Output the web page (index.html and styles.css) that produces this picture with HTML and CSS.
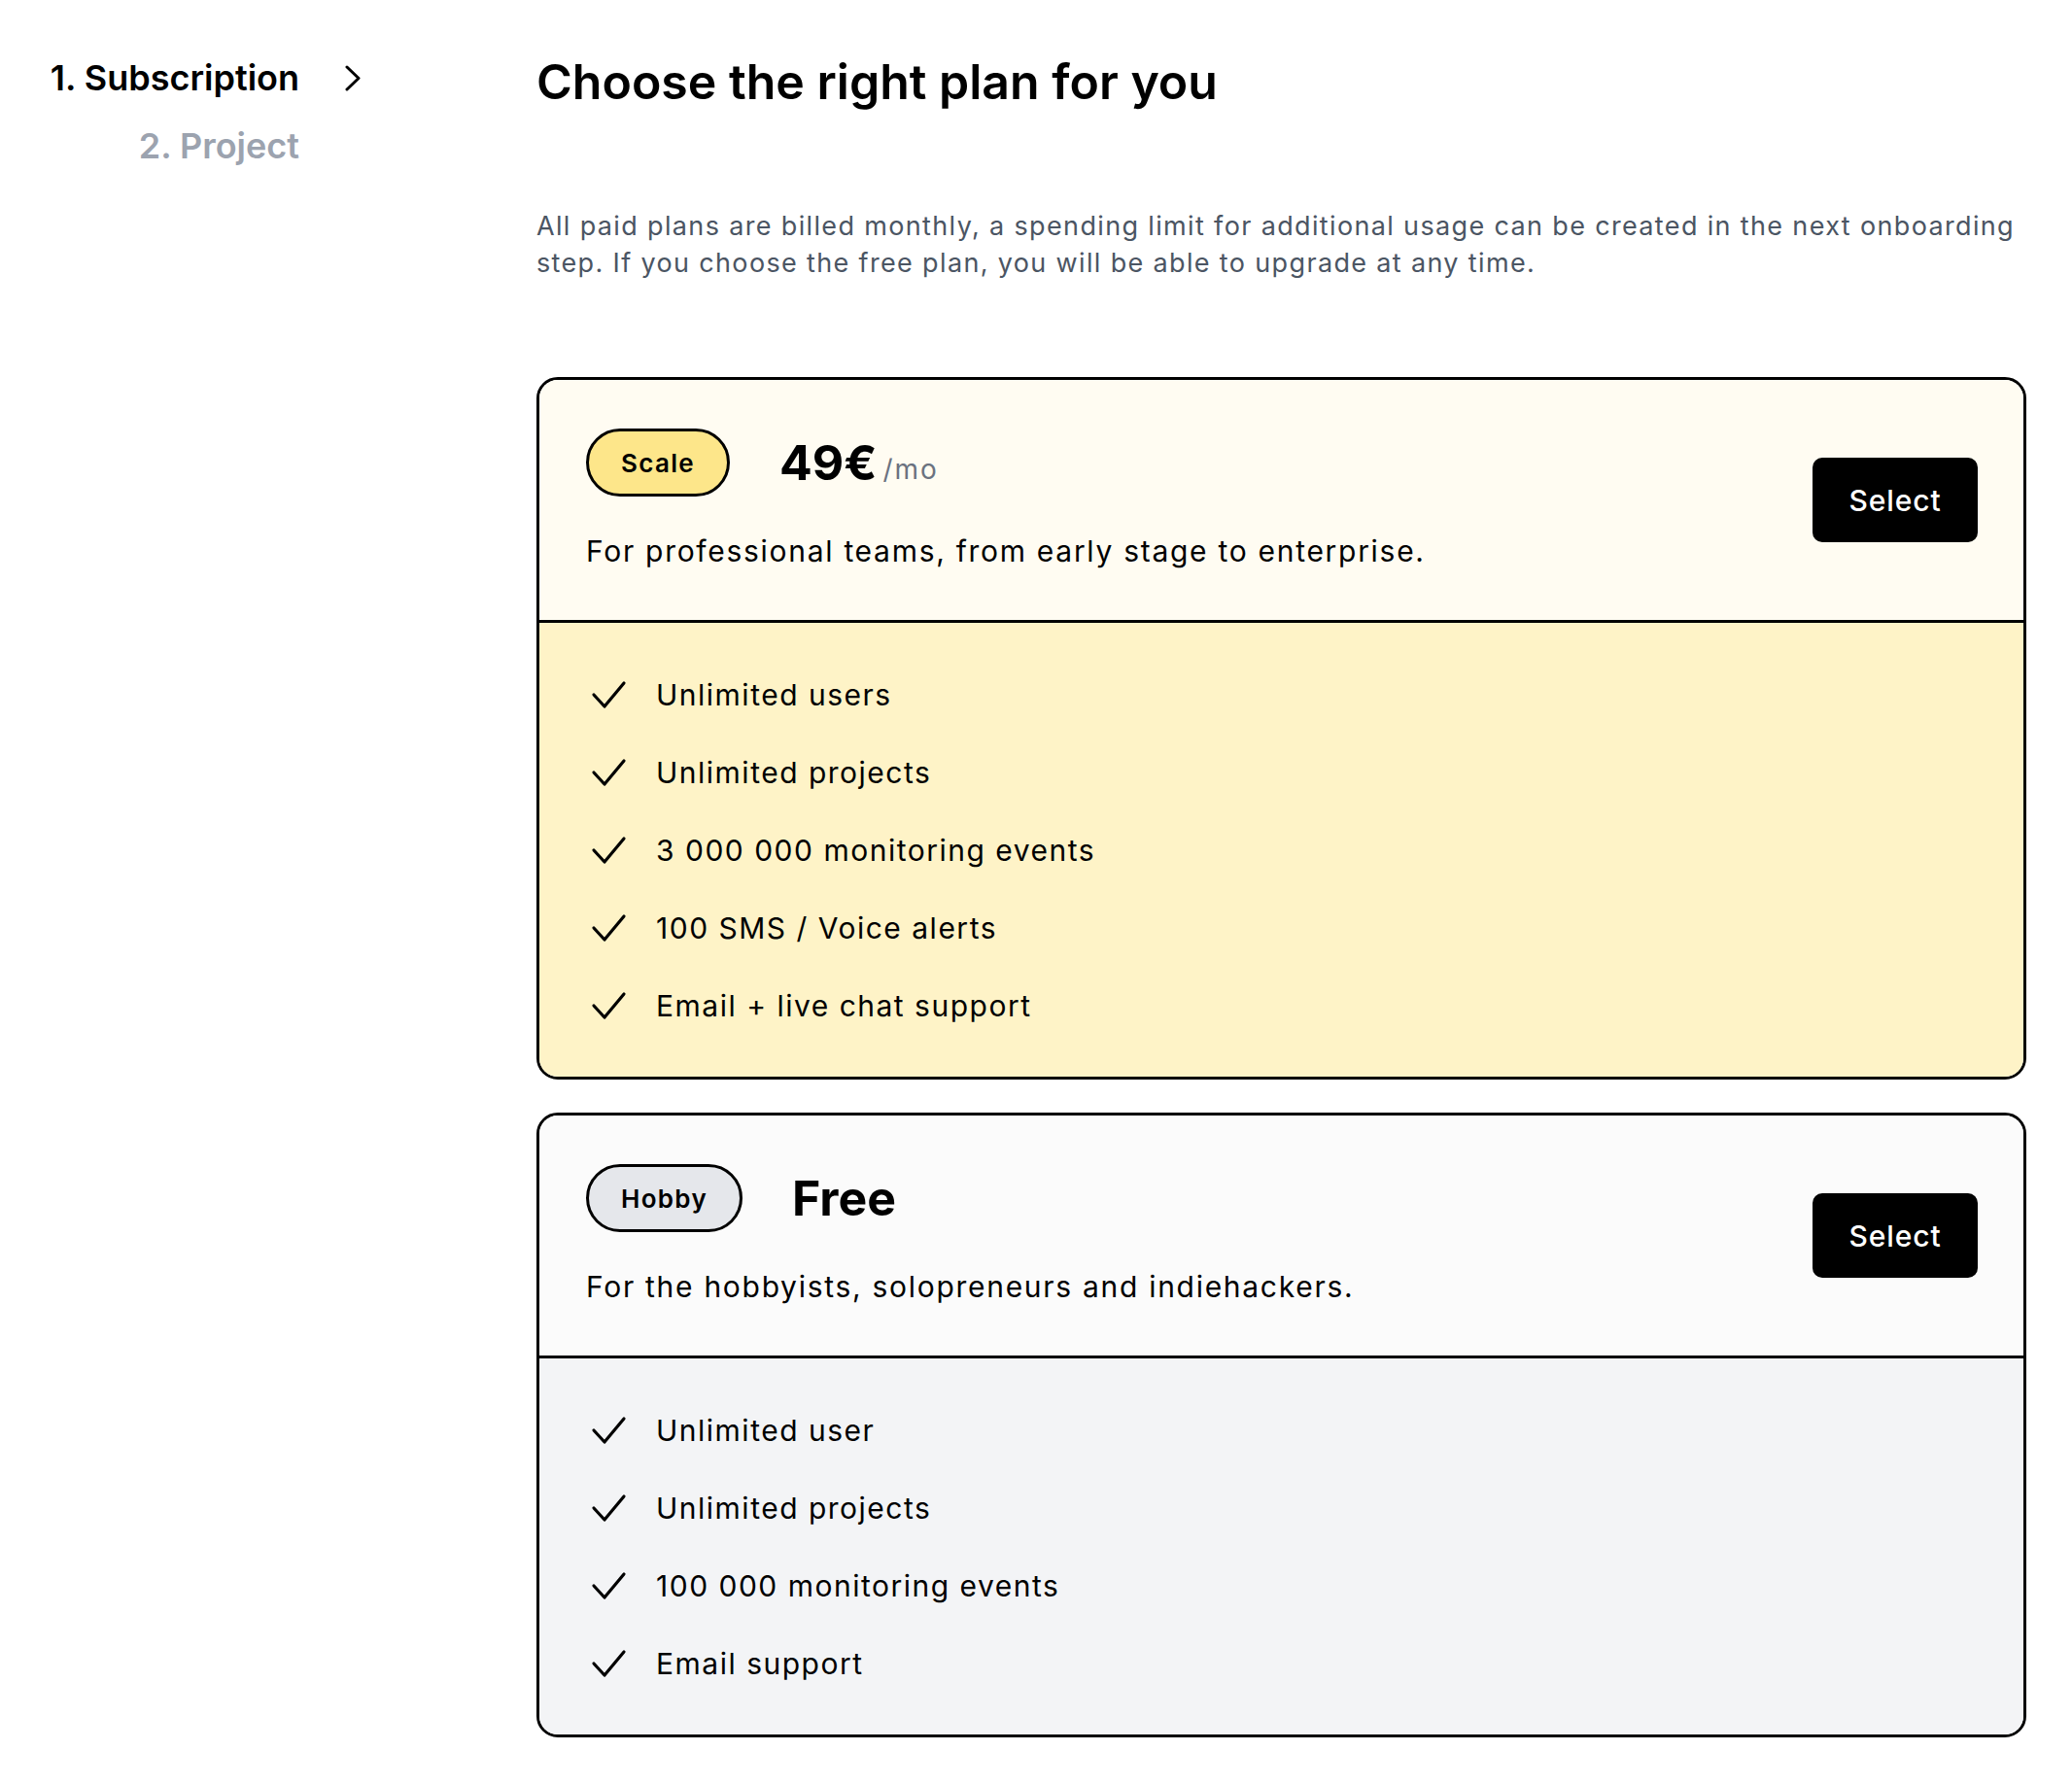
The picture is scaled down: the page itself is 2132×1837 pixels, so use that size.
FILE: index.html
```html
<!DOCTYPE html>
<html lang="en">
<head>
<meta charset="utf-8">
<title>Choose plan</title>
<link rel="stylesheet" href="styles.css">
</head>
<body>
<div class="page">
  <nav class="steps">
    <div class="step active"><span class="step-label">1. Subscription</span><svg class="chev" width="16" height="27" viewBox="0 0 16 27"><path d="M2 2 L14 13.5 L2 25" fill="none" stroke="#000" stroke-width="3" stroke-linecap="round" stroke-linejoin="round"/></svg></div>
    <div class="step"><span class="step-label">2. Project</span></div>
  </nav>
  <main class="main">
    <h1 class="title">Choose the right plan for you</h1>
    <p class="intro">All paid plans are billed monthly, a spending limit for additional usage can be created in the next onboarding step. If you choose the free plan, you will be able to upgrade at any time.</p>
    <div class="plans">
      <section class="plan plan-scale">
        <div class="plan-head">
          <div class="plan-info">
            <div class="plan-title"><span class="badge">Scale</span><span class="price">49€</span><span class="per">/mo</span></div>
            <p class="plan-desc">For professional teams, from early stage to enterprise.</p>
          </div>
          <button class="select">Select</button>
        </div>
        <ul class="features">
          <li><svg class="check" viewBox="0 0 37 30"><path d="M3 15 L14 27 L34 3" fill="none" stroke="#000" stroke-width="3.2" stroke-linecap="round" stroke-linejoin="round"/></svg>Unlimited users</li>
          <li><svg class="check" viewBox="0 0 37 30"><path d="M3 15 L14 27 L34 3" fill="none" stroke="#000" stroke-width="3.2" stroke-linecap="round" stroke-linejoin="round"/></svg>Unlimited projects</li>
          <li><svg class="check" viewBox="0 0 37 30"><path d="M3 15 L14 27 L34 3" fill="none" stroke="#000" stroke-width="3.2" stroke-linecap="round" stroke-linejoin="round"/></svg>3 000 000 monitoring events</li>
          <li><svg class="check" viewBox="0 0 37 30"><path d="M3 15 L14 27 L34 3" fill="none" stroke="#000" stroke-width="3.2" stroke-linecap="round" stroke-linejoin="round"/></svg>100 SMS / Voice alerts</li>
          <li><svg class="check" viewBox="0 0 37 30"><path d="M3 15 L14 27 L34 3" fill="none" stroke="#000" stroke-width="3.2" stroke-linecap="round" stroke-linejoin="round"/></svg>Email + live chat support</li>
        </ul>
      </section>
      <section class="plan plan-hobby">
        <div class="plan-head">
          <div class="plan-info">
            <div class="plan-title"><span class="badge">Hobby</span><span class="price">Free</span></div>
            <p class="plan-desc">For the hobbyists, solopreneurs and indiehackers.</p>
          </div>
          <button class="select">Select</button>
        </div>
        <ul class="features">
          <li><svg class="check" viewBox="0 0 37 30"><path d="M3 15 L14 27 L34 3" fill="none" stroke="#000" stroke-width="3.2" stroke-linecap="round" stroke-linejoin="round"/></svg>Unlimited user</li>
          <li><svg class="check" viewBox="0 0 37 30"><path d="M3 15 L14 27 L34 3" fill="none" stroke="#000" stroke-width="3.2" stroke-linecap="round" stroke-linejoin="round"/></svg>Unlimited projects</li>
          <li><svg class="check" viewBox="0 0 37 30"><path d="M3 15 L14 27 L34 3" fill="none" stroke="#000" stroke-width="3.2" stroke-linecap="round" stroke-linejoin="round"/></svg>100 000 monitoring events</li>
          <li><svg class="check" viewBox="0 0 37 30"><path d="M3 15 L14 27 L34 3" fill="none" stroke="#000" stroke-width="3.2" stroke-linecap="round" stroke-linejoin="round"/></svg>Email support</li>
        </ul>
      </section>
    </div>
  </main>
</div>
</body>
</html>
```
FILE: styles.css
```css
* { box-sizing: border-box; }
html, body { margin: 0; padding: 0; background: #fff; }
body { font-family: "Inter", "Open Sans", sans-serif; color: #000; }

.page { display: flex; align-items: flex-start; }

.steps { width: 552px; flex: none; padding-top: 45px; }
.step { display: grid; grid-template-columns: 308px 64px; align-items: center; height: 70px; font-size: 36px; font-weight: 600; color: #9ca3af; }
.step.active { color: #000; }
.step-label { text-align: right; line-height: 70px; white-space: nowrap; }
.chev { margin-left: 47px; }

.main { width: 1533px; padding-top: 54px; }
.title { margin: 0; font-size: 50px; line-height: 60px; font-weight: 600; }
.intro { margin: 100px 0 0; font-size: 27px; line-height: 38px; letter-spacing: 0.05em; color: #4b5563; }

.plans { margin-top: 98px; display: flex; flex-direction: column; gap: 34px; }
.plan { border: 3px solid #000; border-radius: 22px; overflow: hidden; }
.plan-head { display: flex; align-items: center; justify-content: space-between; padding: 50px 47px 50px 48px; border-bottom: 3px solid #000; }
.plan-scale .plan-head { background: #fffcf2; }
.plan-scale .features { background: #fef3c7; }
.plan-hobby .plan-head { background: #fbfbfb; }
.plan-hobby .features { background: #f3f4f6; }

.plan-title { display: flex; align-items: center; height: 70px; }
.badge { display: inline-flex; align-items: center; height: 70px; padding: 0 33px; border: 3px solid #000; border-radius: 35px; font-size: 26px; font-weight: 600; letter-spacing: 0.05em; }
.plan-scale .badge { background: #fde68a; }
.plan-hobby .badge { background: #e5e7eb; }
.price { margin-left: 51px; font-size: 50px; font-weight: 700; }
.per { margin-left: 6px; margin-top: 14px; font-size: 28px; letter-spacing: 2px; color: #6b7280; }
.plan-desc { margin: 35px 0 0; font-size: 30px; line-height: 42px; letter-spacing: 0.057em; }

.select { width: 170px; height: 87px; border: 0; border-radius: 10px; background: #000; color: #fff; font-family: inherit; font-size: 30px; font-weight: 500; letter-spacing: 0.03em; }

.features { list-style: none; margin: 0; padding: 52px 50px 51px 53px; display: flex; flex-direction: column; gap: 36px; }
.features li { display: flex; align-items: center; gap: 30px; height: 44px; font-size: 30px; letter-spacing: 0.05em; }
.check { width: 37px; height: 30px; flex: none; }
```
